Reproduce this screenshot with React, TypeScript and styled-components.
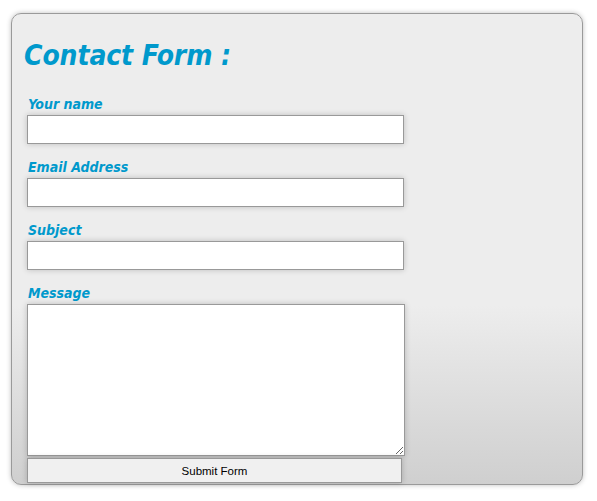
import styled, { createGlobalStyle } from "styled-components";

const GlobalStyle = createGlobalStyle`
  html, body {
    margin: 0;
    padding: 0;
    background: #ffffff;
  }
`;

const fields = [
  { id: "name", label: "Your name" },
  { id: "email", label: "Email Address" },
  { id: "subject", label: "Subject" },
];

const App = () => {
  return (
    <>
      <GlobalStyle />
      <Page>
        <Card>
          <Title>Contact Form :</Title>
          <Form onSubmit={(e) => e.preventDefault()}>
            {fields.map((f) => (
              <Field key={f.id}>
                <Label htmlFor={f.id}>{f.label}</Label>
                <Input id={f.id} type="text" />
              </Field>
            ))}
            <Field>
              <Label htmlFor="message">Message</Label>
              <TextArea id="message" />
            </Field>
            <SubmitButton type="submit">Submit Form</SubmitButton>
          </Form>
        </Card>
      </Page>
    </>
  );
};

export default App;

const Page = styled.div`
  padding: 13px 14px 17px 11px;
`;

const Card = styled.div`
  box-sizing: border-box;
  width: 572px;
  height: 472px;
  border: 1px solid #9a9a9a;
  border-radius: 10px;
  background: linear-gradient(to bottom, #ededed 0%, #ededed 62%, #cfcfcf 100%);
  box-shadow: 0 0 5px rgba(0, 0, 0, 0.25);
  padding: 24px 0 0 15px;
`;

const Title = styled.h1`
  margin: 0 0 22px -3px;
  font-family: "DejaVu Sans Condensed", "DejaVu Sans", sans-serif;
  font-weight: bold;
  font-style: italic;
  font-size: 28px;
  line-height: 36px;
  color: #0099cc;
  letter-spacing: -0.1px;
`;

const Form = styled.form`
  display: flex;
  flex-direction: column;
`;

const Field = styled.div`
  display: flex;
  flex-direction: column;
  margin-bottom: 15px;
  &:last-of-type {
    margin-bottom: 2px;
  }
`;

const Label = styled.label`
  font-family: "DejaVu Sans Condensed", "DejaVu Sans", sans-serif;
  font-weight: bold;
  font-style: italic;
  font-size: 14px;
  line-height: 17px;
  margin-bottom: 2px;
  color: #0099cc;
  padding-left: 1px;
`;

const Input = styled.input`
  box-sizing: border-box;
  width: 377px;
  height: 29px;
  margin: 0;
  border: 1px solid #999999;
  background: #ffffff;
  box-shadow: 0 0 6px rgba(0, 0, 0, 0.2);
  outline: none;
`;

const TextArea = styled.textarea`
  box-sizing: border-box;
  width: 378px;
  height: 152px;
  margin: 0;
  border: 1px solid #999999;
  background: #ffffff;
  box-shadow: 0 0 6px rgba(0, 0, 0, 0.2);
  outline: none;
`;

const SubmitButton = styled.button`
  box-sizing: border-box;
  width: 375px;
  height: 25px;
  margin: 0;
  border: 1px solid #999999;
  background: #f0f0f0;
  box-shadow: 0 0 6px rgba(0, 0, 0, 0.2);
  font-family: "Liberation Sans", Arial, sans-serif;
  font-size: 11.5px;
  color: #000000;
  cursor: pointer;
`;
